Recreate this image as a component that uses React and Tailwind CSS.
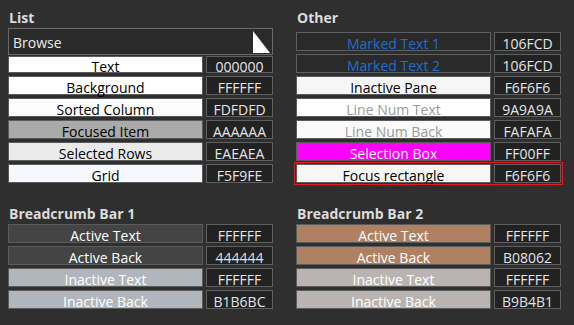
const font = { fontFamily: '"Open Sans", "Noto Sans", sans-serif' }

const listRows = [
  { label: 'Text', sw: 'bg-[#ffffff] text-black', hex: '000000', short: true },
  { label: 'Background', sw: 'bg-[#ffffff] text-black', hex: 'FFFFFF' },
  { label: 'Sorted Column', sw: 'bg-[#fdfdfd] text-black', hex: 'FDFDFD' },
  { label: 'Focused Item', sw: 'bg-[#aaaaaa] text-black', hex: 'AAAAAA' },
  { label: 'Selected Rows', sw: 'bg-[#eaeaea] text-black', hex: 'EAEAEA' },
  { label: 'Grid', sw: 'bg-[#f5f9fe] text-black', hex: 'F5F9FE' },
]

const otherRows = [
  { label: 'Marked Text 1', sw: 'bg-[#2a2a2a] text-[#1f6fcd] border-[#5f5f5f]', hex: '106FCD' },
  { label: 'Marked Text 2', sw: 'bg-[#2a2a2a] text-[#1f6fcd] border-[#5f5f5f]', hex: '106FCD' },
  { label: 'Inactive Pane', sw: 'bg-[#f6f6f6] text-black', hex: 'F6F6F6' },
  { label: 'Line Num Text', sw: 'bg-[#ffffff] text-[#9a9a9a]', hex: '9A9A9A' },
  { label: 'Line Num Back', sw: 'bg-[#fafafa] text-[#9a9a9a]', hex: 'FAFAFA' },
  { label: 'Selection Box', sw: 'bg-[#ff00ff] text-white', hex: 'FF00FF' },
  { label: 'Focus rectangle', sw: 'bg-[#f6f6f6] text-black', hex: 'F6F6F6', focus: true },
]

const bar1 = [
  { label: 'Active Text', sw: 'bg-[#444444] text-white', hex: 'FFFFFF' },
  { label: 'Active Back', sw: 'bg-[#444444] text-white', hex: '444444' },
  { label: 'Inactive Text', sw: 'bg-[#b1b6bc] text-white', hex: 'FFFFFF' },
  { label: 'Inactive Back', sw: 'bg-[#b1b6bc] text-white', hex: 'B1B6BC' },
]

const bar2 = [
  { label: 'Active Text', sw: 'bg-[#b08062] text-white', hex: 'FFFFFF' },
  { label: 'Active Back', sw: 'bg-[#b08062] text-white', hex: 'B08062' },
  { label: 'Inactive Text', sw: 'bg-[#b9b4b1] text-white', hex: 'FFFFFF' },
  { label: 'Inactive Back', sw: 'bg-[#b9b4b1] text-white', hex: 'B9B4B1' },
]

function Row({ r }) {
  const h = r.short ? 'h-[17px]' : 'h-[19px]'
  const pad = r.short ? 'pt-[1px]' : 'pt-[2px]'
  return (
    <div className={`relative flex gap-[3px] ${h}`}>
      {r.focus && <div className="absolute -inset-[2px] border border-[#e01b24]" />}
      <div className={`w-[195px] border border-[#5b5b5b] text-center text-[14px] leading-[17px] ${pad} ${r.sw}`}>
        {r.label}
      </div>
      <div className={`w-[67px] border border-[#5f5f5f] bg-[#222222] text-center text-[14px] leading-[17px] text-[#e4e4e4] ${pad}`}>
        {r.hex}
      </div>
    </div>
  )
}

function Heading({ children }) {
  return <div className="pl-[1px] text-[14px] leading-[16px] font-bold text-[#dcdcdc]">{children}</div>
}

export default function App() {
  return (
    <div className="w-[574px] h-[325px] bg-[#2f2f2f] overflow-hidden pl-[8px] pt-[10px]" style={font}>
      <div className="flex gap-[23px]">
        <div className="w-[265px]">
          <Heading>List</Heading>
          <div className="mt-[2px] h-[27px] border border-[#6a6a6a] bg-[#2a2a2a] flex items-start justify-between">
            <span className="pl-[4px] pt-[4px] text-[14px] leading-[19px] text-[#ececec]">Browse</span>
            <svg width="18" height="22" viewBox="0 0 18 22" className="mt-[2px] mr-[1px]">
              <polygon points="0,0 0,22 17,22" fill="#ffffff" />
            </svg>
          </div>
          <div className="mt-[1px] flex flex-col gap-[3px]">
            {listRows.map(r => <Row key={r.label} r={r} />)}
          </div>
        </div>
        <div className="w-[265px]">
          <Heading>Other</Heading>
          <div className="mt-[6px] flex flex-col gap-[3px]">
            {otherRows.map(r => <Row key={r.label} r={r} />)}
          </div>
        </div>
      </div>
      <div className="mt-[23px] flex gap-[23px]">
        <div className="w-[265px]">
          <Heading>Breadcrumb Bar 1</Heading>
          <div className="mt-[2px] flex flex-col gap-[3px]">
            {bar1.map(r => <Row key={r.label} r={r} />)}
          </div>
        </div>
        <div className="w-[265px]">
          <Heading>Breadcrumb Bar 2</Heading>
          <div className="mt-[2px] flex flex-col gap-[3px]">
            {bar2.map(r => <Row key={r.label} r={r} />)}
          </div>
        </div>
      </div>
    </div>
  )
}
